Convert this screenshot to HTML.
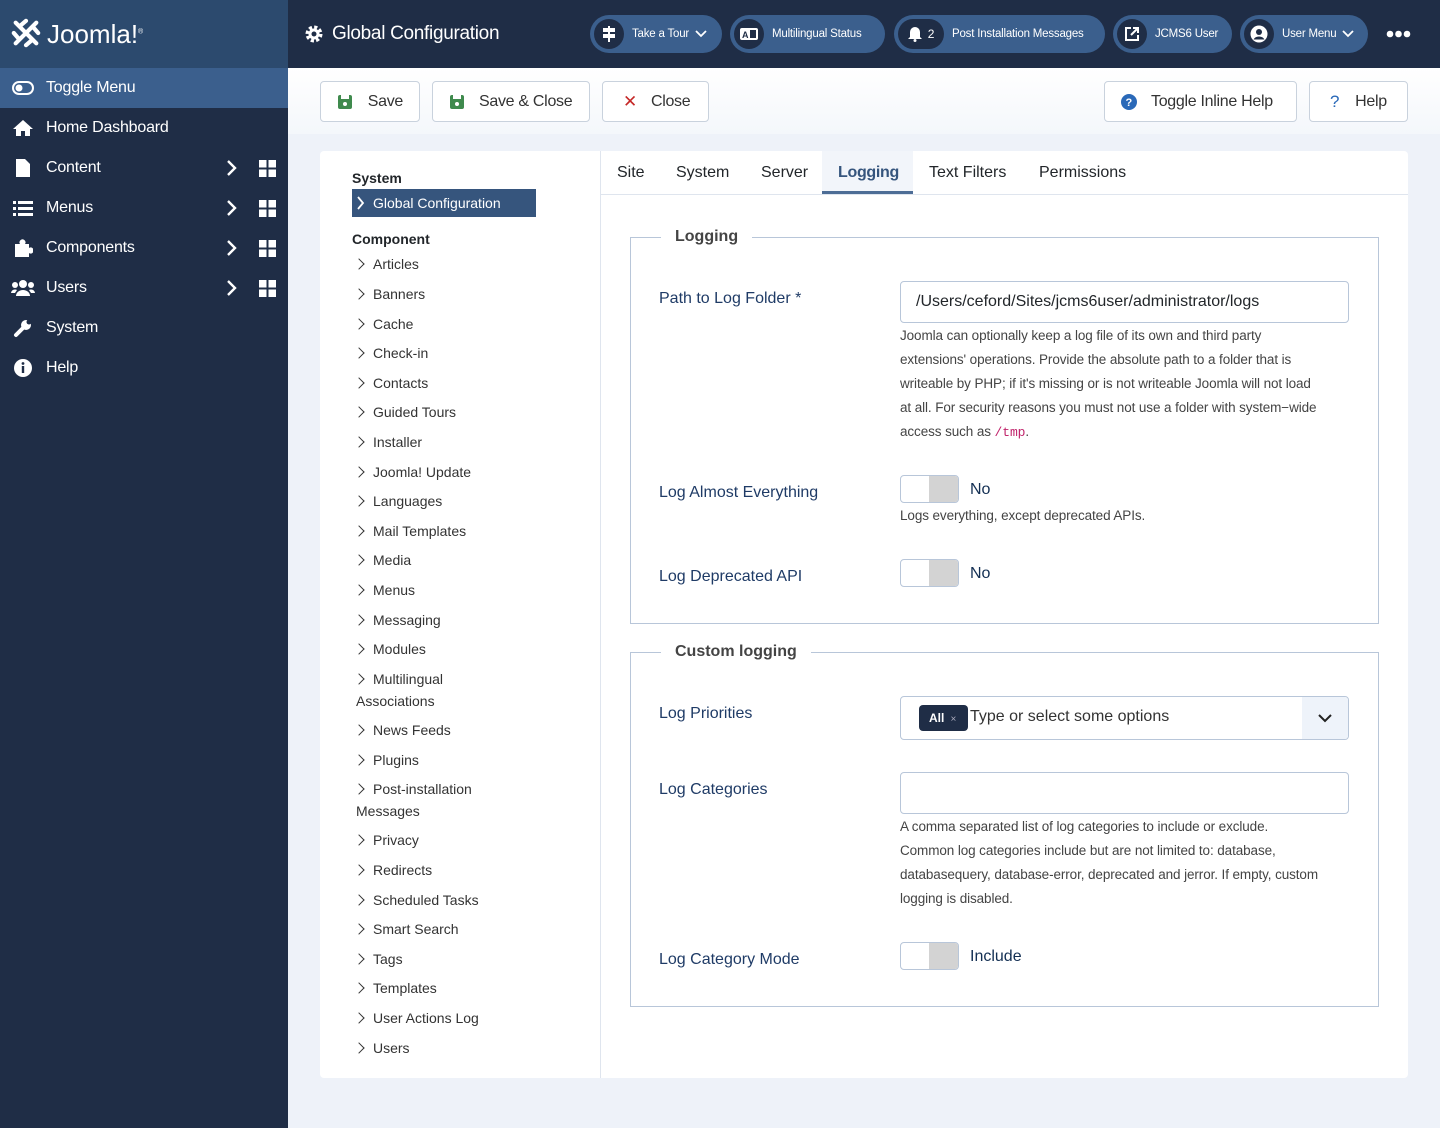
<!DOCTYPE html>
<html><head><meta charset="utf-8"><style>
*{box-sizing:border-box;margin:0;padding:0}
body{width:1440px;height:1128px;background:#eef2f9;font-family:"Liberation Sans",sans-serif;position:relative;overflow:hidden;color:#22262a}
.abs{position:absolute}
#side{left:0;top:0;width:288px;height:1128px;background:#1f2d46}
#logo{left:0;top:0;width:288px;height:68px;background:#2c4a6e}
#tog{left:0;top:68px;width:288px;height:40px;background:#3b5f8d}
.si{position:absolute;left:0;width:288px;height:40px;color:#fff;font-size:16px;display:flex;align-items:center;letter-spacing:-0.2px}
.si .ic{width:46px;display:flex;justify-content:center}
.si .lab{flex:1}
.si .ar{position:absolute;left:226px;top:11px}
.si .gr{position:absolute;left:259px;top:12px}
#hdr{left:288px;top:0;width:1152px;height:68px;background:#1f2d46}
.pill{position:absolute;top:15px;height:38px;border-radius:19px;background:#3b5f8d;color:#fff;font-size:11.5px;display:flex;align-items:center;padding:0 10px 0 4px;white-space:nowrap;letter-spacing:-0.2px}
.pill .c{width:30px;height:30px;border-radius:15px;background:#1f2d46;display:flex;align-items:center;justify-content:center;margin-right:8px}
#tb{left:288px;top:68px;width:1152px;height:66px;background:linear-gradient(#fff,#f4f7fb)}
.btn{position:absolute;top:13px;height:41px;border:1px solid #c9d2dd;border-radius:4px;background:#fff;font-size:16px;color:#333;display:flex;align-items:center;padding:0 16px;white-space:nowrap;letter-spacing:-0.3px}
#card{left:320px;top:151px;width:1088px;height:927px;background:#fff;border-radius:4px}
.mi{position:absolute;left:356px;font-size:14px;color:#333;line-height:21.5px}
.mi:before{content:"";position:absolute;left:-1px;top:6px;width:7px;height:7px;border-right:1.6px solid #333;border-bottom:1.6px solid #333;transform:rotate(-45deg)}
.mi span{padding-left:17px}
.tab{position:absolute;top:164px;font-size:16px;color:#22262a}
fieldset{position:absolute;border:1px solid #b8c6d9;border-radius:0}
legend{font-size:16px;font-weight:bold;color:#444;padding:0 14px;margin-left:30px}
.lbl{position:absolute;left:659px;font-size:16px;color:#1f3b66}
.desc{position:absolute;left:900px;font-size:13.5px;color:#444;line-height:24px;white-space:nowrap;letter-spacing:-0.1px}
.inp{position:absolute;left:900px;width:449px;border:1px solid #b8c6d9;border-radius:4px;background:#fff}
.sw{position:absolute;left:900px;width:59px;height:28px;border:1px solid #b8c6d9;border-radius:4px;background:#fff;overflow:hidden}
.sw:after{content:"";position:absolute;right:0;top:0;width:29px;height:28px;background:#d3d3d3}
.swl{position:absolute;left:970px;font-size:16px;color:#132f53}
</style></head><body>
<div id="side" class="abs"></div>
<div id="logo" class="abs">
<svg class="abs" style="left:11px;top:18px" width="30" height="30" viewBox="0 0 32 32" fill="none" stroke="#fff" stroke-width="4.5" stroke-linecap="round"><path d="M5 5 L27 27 M27 5 L5 27 M9 9 L16 3 M23 23 L16 29 M9 23 L3 16 M23 9 L29 16"/></svg>
<div class="abs" style="left:47px;top:19px;color:#fff;font-size:26px;font-weight:normal;letter-spacing:0px">Joomla!<sup style="font-size:7px">®</sup></div>
</div>
<div id="tog" class="abs"></div>
<div class="si" style="top:68px"><div class="ic"><svg width="22" height="16"><rect x="1" y="2" width="20" height="12" rx="6" fill="none" stroke="#fff" stroke-width="2"/><circle cx="7" cy="8" r="3.5" fill="#fff"/></svg></div><div class="lab">Toggle Menu</div></div>
<div class="si" style="top:108px"><div class="ic"><svg width="22" height="18"><path d="M11 1 L21 10 H18 V17 H13 V12 H9 V17 H4 V10 H1Z" fill="#fff"/></svg></div><div class="lab">Home Dashboard</div></div>
<div class="si" style="top:148px"><div class="ic"><svg width="14" height="18"><path d="M0 0 H9 L14 5 V18 H0Z" fill="#fff"/></svg></div><div class="lab">Content</div><svg class="ar" width="12" height="18"><path d="M2 2 L9 9 L2 16" stroke="#fff" stroke-width="2.4" fill="none"/></svg><svg class="gr" width="17" height="17" fill="#fff"><rect width="7.5" height="7.5"/><rect x="9.5" width="7.5" height="7.5"/><rect y="9.5" width="7.5" height="7.5"/><rect x="9.5" y="9.5" width="7.5" height="7.5"/></svg></div>
<div class="si" style="top:188px"><div class="ic"><svg width="20" height="16" fill="#fff"><rect x="0" y="1" width="3" height="3"/><rect x="5" y="1" width="15" height="3"/><rect x="0" y="7" width="3" height="3"/><rect x="5" y="7" width="15" height="3"/><rect x="0" y="13" width="3" height="3"/><rect x="5" y="13" width="15" height="3"/></svg></div><div class="lab">Menus</div><svg class="ar" width="12" height="18"><path d="M2 2 L9 9 L2 16" stroke="#fff" stroke-width="2.4" fill="none"/></svg><svg class="gr" width="17" height="17" fill="#fff"><rect width="7.5" height="7.5"/><rect x="9.5" width="7.5" height="7.5"/><rect y="9.5" width="7.5" height="7.5"/><rect x="9.5" y="9.5" width="7.5" height="7.5"/></svg></div>
<div class="si" style="top:228px"><div class="ic"><svg width="20" height="20" fill="#fff"><path d="M2 6 H7 A3 3 0 1 1 12 6 H16 V10 A3 3 0 1 1 16 15 V19 H2Z"/></svg></div><div class="lab">Components</div><svg class="ar" width="12" height="18"><path d="M2 2 L9 9 L2 16" stroke="#fff" stroke-width="2.4" fill="none"/></svg><svg class="gr" width="17" height="17" fill="#fff"><rect width="7.5" height="7.5"/><rect x="9.5" width="7.5" height="7.5"/><rect y="9.5" width="7.5" height="7.5"/><rect x="9.5" y="9.5" width="7.5" height="7.5"/></svg></div>
<div class="si" style="top:268px"><div class="ic"><svg width="24" height="18" fill="#fff"><circle cx="12" cy="5" r="4"/><path d="M5 17 A7 6 0 0 1 19 17Z"/><circle cx="4" cy="6" r="3"/><circle cx="20" cy="6" r="3"/><path d="M0 14 A4 4 0 0 1 6 11 L4 14Z M24 14 A4 4 0 0 0 18 11 L20 14Z"/></svg></div><div class="lab">Users</div><svg class="ar" width="12" height="18"><path d="M2 2 L9 9 L2 16" stroke="#fff" stroke-width="2.4" fill="none"/></svg><svg class="gr" width="17" height="17" fill="#fff"><rect width="7.5" height="7.5"/><rect x="9.5" width="7.5" height="7.5"/><rect y="9.5" width="7.5" height="7.5"/><rect x="9.5" y="9.5" width="7.5" height="7.5"/></svg></div>
<div class="si" style="top:308px"><div class="ic"><svg width="20" height="20"><path d="M3 17 L11 9" stroke="#fff" stroke-width="4" stroke-linecap="round"/><circle cx="13" cy="7" r="5" fill="#fff"/><circle cx="16" cy="4" r="2.5" fill="#1f2d46"/></svg></div><div class="lab">System</div></div>
<div class="si" style="top:348px"><div class="ic"><svg width="20" height="20"><circle cx="10" cy="10" r="9" fill="#fff"/><rect x="8.8" y="8" width="2.4" height="7" fill="#1f2d46"/><circle cx="10" cy="5.5" r="1.4" fill="#1f2d46"/></svg></div><div class="lab">Help</div></div>

<div id="hdr" class="abs">
<svg class="abs" style="left:16px;top:24px" width="20" height="20" viewBox="0 0 20 20"><circle cx="10" cy="10" r="6.5" fill="none" stroke="#fff" stroke-width="4" stroke-dasharray="3 2.1"/><circle cx="10" cy="10" r="5.5" fill="#fff"/><circle cx="10" cy="10" r="2.5" fill="#1f2d46"/></svg>
<div class="abs" style="left:44px;top:23px;color:#fff;font-size:19px;letter-spacing:-0.3px">Global Configuration</div>
</div>
<div class="pill" style="left:590px;width:132px"><div class="c"><svg width="14" height="16" fill="#fff"><rect x="1" y="2" width="12" height="4"/><rect x="1" y="8" width="12" height="4"/><rect x="6" y="0" width="2" height="16"/></svg></div>Take a Tour&nbsp;&nbsp;<svg width="12" height="8"><path d="M1 1 L6 6 L11 1" stroke="#fff" stroke-width="1.8" fill="none"/></svg></div>
<div class="pill" style="left:730px;width:155px"><div class="c"><svg width="20" height="14"><rect x="1" y="1" width="18" height="12" rx="2" fill="#fff"/><text x="3" y="11" font-size="9" font-weight="bold" fill="#1f2d46" font-family="Liberation Sans">A</text><rect x="11" y="3" width="6" height="8" fill="#1f2d46"/></svg></div>Multilingual Status</div>
<div class="pill" style="left:894px;width:211px"><div class="c" style="width:46px"><svg width="14" height="16" fill="#fff"><path d="M7 1 A5 5 0 0 1 12 6 V11 L14 13 H0 L2 11 V6 A5 5 0 0 1 7 1Z"/><circle cx="7" cy="14.5" r="1.5"/></svg>&nbsp;&nbsp;<span style="font-size:12px">2</span></div>Post Installation Messages</div>
<div class="pill" style="left:1113px;width:119px"><div class="c"><svg width="16" height="16" fill="none" stroke="#fff" stroke-width="2"><path d="M7 2 H2 V14 H14 V9 M9 2 H14 V7 M14 2 L7 9"/></svg></div>JCMS6 User</div>
<div class="pill" style="left:1240px;width:128px"><div class="c"><svg width="18" height="18"><circle cx="9" cy="9" r="8.5" fill="#fff"/><circle cx="9" cy="7" r="3" fill="#1f2d46"/><path d="M3.5 14.5 A6 5 0 0 1 14.5 14.5" fill="#1f2d46"/></svg></div>User Menu&nbsp;&nbsp;<svg width="12" height="8"><path d="M1 1 L6 6 L11 1" stroke="#fff" stroke-width="1.8" fill="none"/></svg></div>
<svg class="abs" style="left:1386px;top:30px" width="25" height="8" fill="#fff"><circle cx="4" cy="4" r="3.3"/><circle cx="12.5" cy="4" r="3.3"/><circle cx="21" cy="4" r="3.3"/></svg>

<div id="tb" class="abs">
<div class="btn" style="left:32px;width:100px"><svg width="16" height="16"><rect x="1" y="1" width="14" height="14" rx="2" fill="#3f8a4d"/><rect x="4" y="1" width="8" height="4" fill="#fff"/><circle cx="8" cy="10" r="2" fill="#fff"/></svg><span style="margin-left:16px">Save</span></div>
<div class="btn" style="left:144px;width:158px"><svg width="16" height="16"><rect x="1" y="1" width="14" height="14" rx="2" fill="#3f8a4d"/><rect x="4" y="1" width="8" height="4" fill="#fff"/><circle cx="8" cy="10" r="2" fill="#fff"/></svg><span style="margin-left:14px">Save &amp; Close</span></div>
<div class="btn" style="left:314px;width:107px"><span style="color:#c52827;font-size:17px;margin-left:4px">✕</span><span style="margin-left:14px">Close</span></div>
<div class="btn" style="left:816px;width:193px"><svg width="16" height="16"><circle cx="8" cy="8" r="8" fill="#2a69b8"/><text x="4.5" y="12" font-size="11" font-weight="bold" fill="#fff" font-family="Liberation Sans">?</text></svg><span style="margin-left:14px">Toggle Inline Help</span></div>
<div class="btn" style="left:1021px;width:99px"><span style="color:#2a69b8;font-size:17px;margin-left:4px">?</span><span style="margin-left:16px">Help</span></div>
</div>

<div id="card" class="abs"></div>
<div class="abs" style="left:600px;top:151px;width:1px;height:927px;background:#dfe5ee"></div>
<div class="abs" style="left:601px;top:194px;width:807px;height:1px;background:#dfe5ee"></div>
<div class="abs" style="left:352px;top:170px;font-size:14px;font-weight:bold">System</div>
<div class="abs" style="left:352px;top:189px;width:184px;height:28px;background:#36557d;color:#fff;font-size:14px;line-height:28px;padding-left:21px">Global Configuration</div>
<svg class="abs" style="left:357px;top:196px" width="8" height="14"><path d="M1 1 L6 7 L1 13" stroke="#fff" stroke-width="1.8" fill="none"/></svg>
<div class="abs" style="left:352px;top:231px;font-size:14px;font-weight:bold">Component</div>
<div class="mi" style="top:254px"><span>Articles</span></div>
<div class="mi" style="top:284px"><span>Banners</span></div>
<div class="mi" style="top:314px"><span>Cache</span></div>
<div class="mi" style="top:343px"><span>Check-in</span></div>
<div class="mi" style="top:373px"><span>Contacts</span></div>
<div class="mi" style="top:402px"><span>Guided Tours</span></div>
<div class="mi" style="top:432px"><span>Installer</span></div>
<div class="mi" style="top:462px"><span>Joomla! Update</span></div>
<div class="mi" style="top:491px"><span>Languages</span></div>
<div class="mi" style="top:521px"><span>Mail Templates</span></div>
<div class="mi" style="top:550px"><span>Media</span></div>
<div class="mi" style="top:580px"><span>Menus</span></div>
<div class="mi" style="top:610px"><span>Messaging</span></div>
<div class="mi" style="top:639px"><span>Modules</span></div>
<div class="mi" style="top:669px"><span>Multilingual</span><br>Associations</div>
<div class="mi" style="top:720px"><span>News Feeds</span></div>
<div class="mi" style="top:750px"><span>Plugins</span></div>
<div class="mi" style="top:779px"><span>Post-installation</span><br>Messages</div>
<div class="mi" style="top:830px"><span>Privacy</span></div>
<div class="mi" style="top:860px"><span>Redirects</span></div>
<div class="mi" style="top:890px"><span>Scheduled Tasks</span></div>
<div class="mi" style="top:919px"><span>Smart Search</span></div>
<div class="mi" style="top:949px"><span>Tags</span></div>
<div class="mi" style="top:978px"><span>Templates</span></div>
<div class="mi" style="top:1008px"><span>User Actions Log</span></div>
<div class="mi" style="top:1038px"><span>Users</span></div>

<div class="abs" style="left:822px;top:151px;width:91px;height:43px;background:#f2f5fa;border-bottom:3px solid #4d6d96"></div>
<div class="tab" style="left:617px">Site</div>
<div class="tab" style="left:676px">System</div>
<div class="tab" style="left:761px">Server</div>
<div class="tab" style="left:838px;color:#36557d;font-weight:bold;letter-spacing:-0.3px">Logging</div>
<div class="tab" style="left:929px">Text Filters</div>
<div class="tab" style="left:1039px">Permissions</div>

<fieldset style="left:630px;top:228px;width:749px;height:396px"><legend>Logging</legend></fieldset>
<fieldset style="left:630px;top:643px;width:749px;height:364px"><legend>Custom logging</legend></fieldset>

<div class="lbl" style="top:290px">Path to Log Folder *</div>
<div class="inp" style="top:281px;height:42px;font-size:16px;padding:11px 15px;color:#22262a">/Users/ceford/Sites/jcms6user/administrator/logs</div>
<div class="desc" style="top:324px">Joomla can optionally keep a log file of its own and third party<br>extensions' operations. Provide the absolute path to a folder that is<br>writeable by PHP; if it's missing or is not writeable Joomla will not load<br>at all. For security reasons you must not use a folder with system−wide<br>access such as <span style="font-family:'Liberation Mono',monospace;color:#c0246b;font-size:13px">/tmp</span>.</div>

<div class="lbl" style="top:484px">Log Almost Everything</div>
<div class="sw" style="top:475px"></div><div class="swl" style="top:481px">No</div>
<div class="desc" style="top:504px">Logs everything, except deprecated APIs.</div>

<div class="lbl" style="top:568px">Log Deprecated API</div>
<div class="sw" style="top:559px"></div><div class="swl" style="top:565px">No</div>

<div class="lbl" style="top:705px">Log Priorities</div>
<div class="inp" style="top:696px;height:44px;overflow:hidden">
<div class="abs" style="left:18px;top:8px;width:49px;height:26px;background:#1f2d46;border-radius:4px;color:#fff;font-size:12px;font-weight:bold;line-height:26px;padding-left:10px">All <span style="font-weight:normal;font-size:10px;color:#aab">&nbsp;×</span></div>
<div class="abs" style="left:69px;top:11px;font-size:16px;color:#333">Type or select some options</div>
<div class="abs" style="right:0;top:0;width:46px;height:44px;background:#eef3fa"></div>
<svg class="abs" style="right:16px;top:17px" width="14" height="9"><path d="M1 1 L7 7 L13 1" stroke="#222" stroke-width="2" fill="none"/></svg>
</div>

<div class="lbl" style="top:781px">Log Categories</div>
<div class="inp" style="top:772px;height:42px"></div>
<div class="desc" style="top:815px">A comma separated list of log categories to include or exclude.<br>Common log categories include but are not limited to: database,<br>databasequery, database-error, deprecated and jerror. If empty, custom<br>logging is disabled.</div>

<div class="lbl" style="top:951px">Log Category Mode</div>
<div class="sw" style="top:942px"></div><div class="swl" style="top:948px">Include</div>
</body></html>
